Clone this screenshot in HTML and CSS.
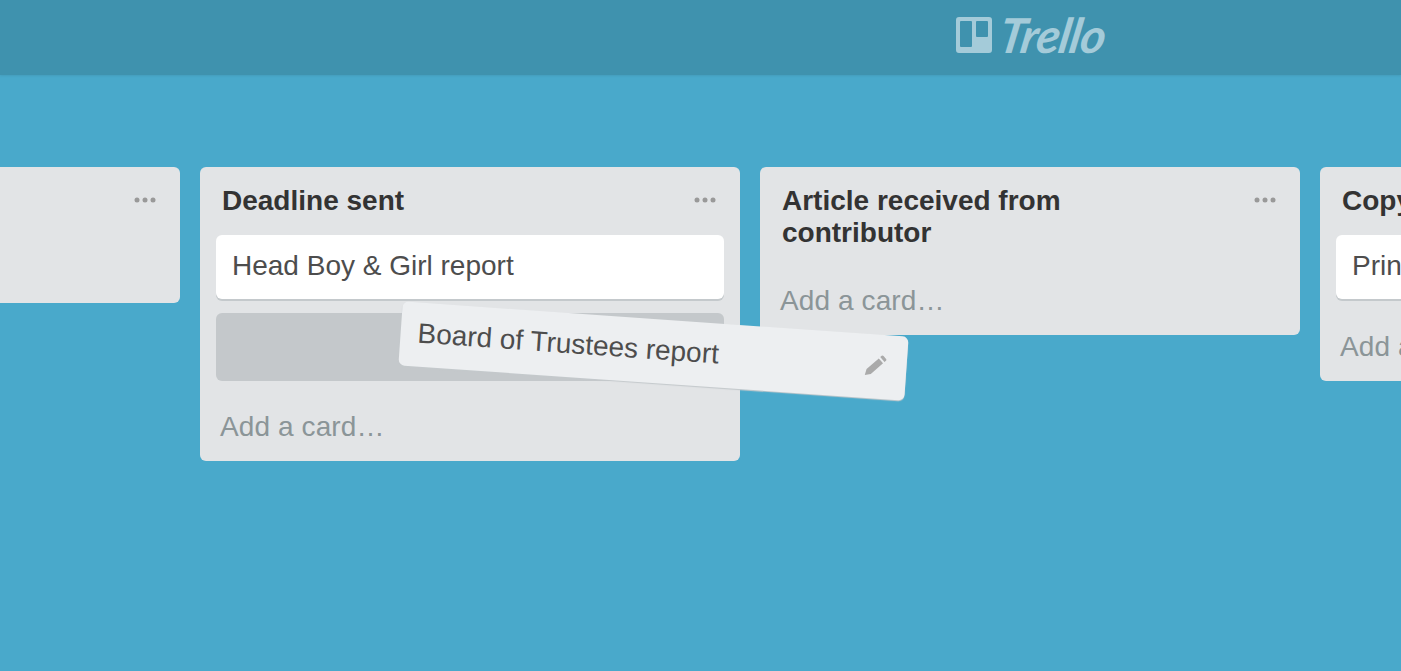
FILE: index.html
```html
<!DOCTYPE html>
<html lang="en">
<head>
    <meta charset="UTF-8">
    <title>Trello</title>
    <link rel="stylesheet" href="styles.css">
</head>
<body>
<div class="header">
    <div class="logo">
        <svg class="logo_icon" width="36" height="36" viewBox="0 0 36 36">
            <path fill-rule="evenodd" d="M3 0h30a3 3 0 0 1 3 3v30a3 3 0 0 1-3 3H3a3 3 0 0 1-3-3V3a3 3 0 0 1 3-3zM5 4a1 1 0 0 0-1 1v24a1 1 0 0 0 1 1h10a1 1 0 0 0 1-1V5a1 1 0 0 0-1-1zM21 4a1 1 0 0 0-1 1v14a1 1 0 0 0 1 1h10a1 1 0 0 0 1-1V5a1 1 0 0 0-1-1z"/>
        </svg>
        <span class="logo_text">Trello</span>
    </div>
</div>
<div class="board">
    <div class="list list_first">
        <div class="list_head">
            <h2 class="list_title"></h2>
            <svg class="list_menu" width="22" height="6" viewBox="0 0 22 6"><circle cx="3" cy="3" r="2.500"/><circle cx="11" cy="3" r="2.500"/><circle cx="19" cy="3" r="2.500"/></svg>
        </div>
    </div>
    <div class="list">
        <div class="list_head">
            <h2 class="list_title">Deadline sent</h2>
            <svg class="list_menu" width="22" height="6" viewBox="0 0 22 6"><circle cx="3" cy="3" r="2.500"/><circle cx="11" cy="3" r="2.500"/><circle cx="19" cy="3" r="2.500"/></svg>
        </div>
        <div class="cards">
            <div class="card">Head Boy &amp; Girl report</div>
            <div class="placeholder"></div>
        </div>
        <div class="add_card">Add a card…</div>
    </div>
    <div class="list">
        <div class="list_head">
            <h2 class="list_title">Article received from contributor</h2>
            <svg class="list_menu" width="22" height="6" viewBox="0 0 22 6"><circle cx="3" cy="3" r="2.500"/><circle cx="11" cy="3" r="2.500"/><circle cx="19" cy="3" r="2.500"/></svg>
        </div>
        <div class="cards cards_empty"></div>
        <div class="add_card">Add a card…</div>
    </div>
    <div class="list">
        <div class="list_head">
            <h2 class="list_title">Copy</h2>
            <svg class="list_menu" width="22" height="6" viewBox="0 0 22 6"><circle cx="3" cy="3" r="2.500"/><circle cx="11" cy="3" r="2.500"/><circle cx="19" cy="3" r="2.500"/></svg>
        </div>
        <div class="cards">
            <div class="card">Print</div>
        </div>
        <div class="add_card">Add a card…</div>
    </div>
</div>
<div class="drag_card">
    <span>Board of Trustees report</span>
    <svg class="pencil" width="22" height="22" viewBox="0 0 24 24">
        <path d="M1 23l1.500-6.500L15 4l5 5L7.500 21.500zM16.500 2.500l1.500-1.500a1.400 1.400 0 0 1 2 0l3 3a1.400 1.400 0 0 1 0 2l-1.500 1.500z"/>
    </svg>
</div>
</body>
</html>
```

FILE: styles.css
```css
html, body {
    height: 100%;
}

body {
    margin: 0;
    overflow: hidden;
    background: #49a9cb;
    font-family: "Liberation Sans", Arial, sans-serif;
    color: #4d4d4d;
}

.header {
    height: 75px;
    box-sizing: border-box;
    padding-bottom: 5px;
    background: #3f92ae;
    box-shadow: 0 1px 2px rgba(0, 0, 0, 0.08);
    display: flex;
    align-items: center;
}

.logo {
    margin-left: 956px;
    display: flex;
    align-items: center;
    gap: 8px;
    color: #a4cbd9;
}

.logo_icon {
    fill: #a4cbd9;
    display: block;
}

.logo_text {
    font-family: Lato, sans-serif;
    font-style: italic;
    font-weight: bold;
    font-size: 48px;
    line-height: 40px;
    letter-spacing: -0.8px;
    transform: skewX(-10deg);
}

.board {
    display: flex;
    align-items: flex-start;
    gap: 20px;
    margin-left: -360px;
    padding-top: 92px;
}

.list {
    flex: none;
    width: 540px;
    box-sizing: border-box;
    padding: 0 16px;
    background: #e2e4e6;
    border-radius: 6px;
}

.list_first {
    height: 136px;
}

.list_head {
    display: flex;
    justify-content: space-between;
    padding: 18px 0 0 6px;
}

.list_title {
    margin: 0;
    width: 400px;
    min-height: 32px;
    font-size: 28px;
    line-height: 32px;
    font-weight: bold;
    color: #333;
}

.list_menu {
    fill: #999;
    flex: none;
    margin: 12px 8px 0 0;
}

.cards {
    display: flow-root;
    padding-top: 18px;
}

.cards_empty {
    padding-top: 6px;
}

.card {
    height: 64px;
    margin-bottom: 2px;
    padding: 0 16px;
    background: #fff;
    border-radius: 6px;
    box-shadow: 0 2px 0 #c4c9cc;
    font-size: 28px;
    line-height: 62px;
}

.placeholder {
    height: 68px;
    margin-top: 14px;
    background: #c4c8cb;
    border-radius: 6px;
}

.add_card {
    padding: 0 4px;
    margin-top: 20px;
    height: 60px;
    font-size: 28px;
    line-height: 52px;
    letter-spacing: 0.1px;
    color: #8b9598;
}

.drag_card {
    position: absolute;
    left: 400px;
    top: 319px;
    width: 507px;
    height: 64px;
    box-sizing: border-box;
    padding: 0 20px 2px 17px;
    display: flex;
    justify-content: space-between;
    align-items: center;
    background: #edeff1;
    border-radius: 6px;
    box-shadow: 0 1px 1px #c4c9cc;
    font-size: 28px;
    transform: rotate(4deg);
}

.pencil {
    fill: #aaa;
}
```
